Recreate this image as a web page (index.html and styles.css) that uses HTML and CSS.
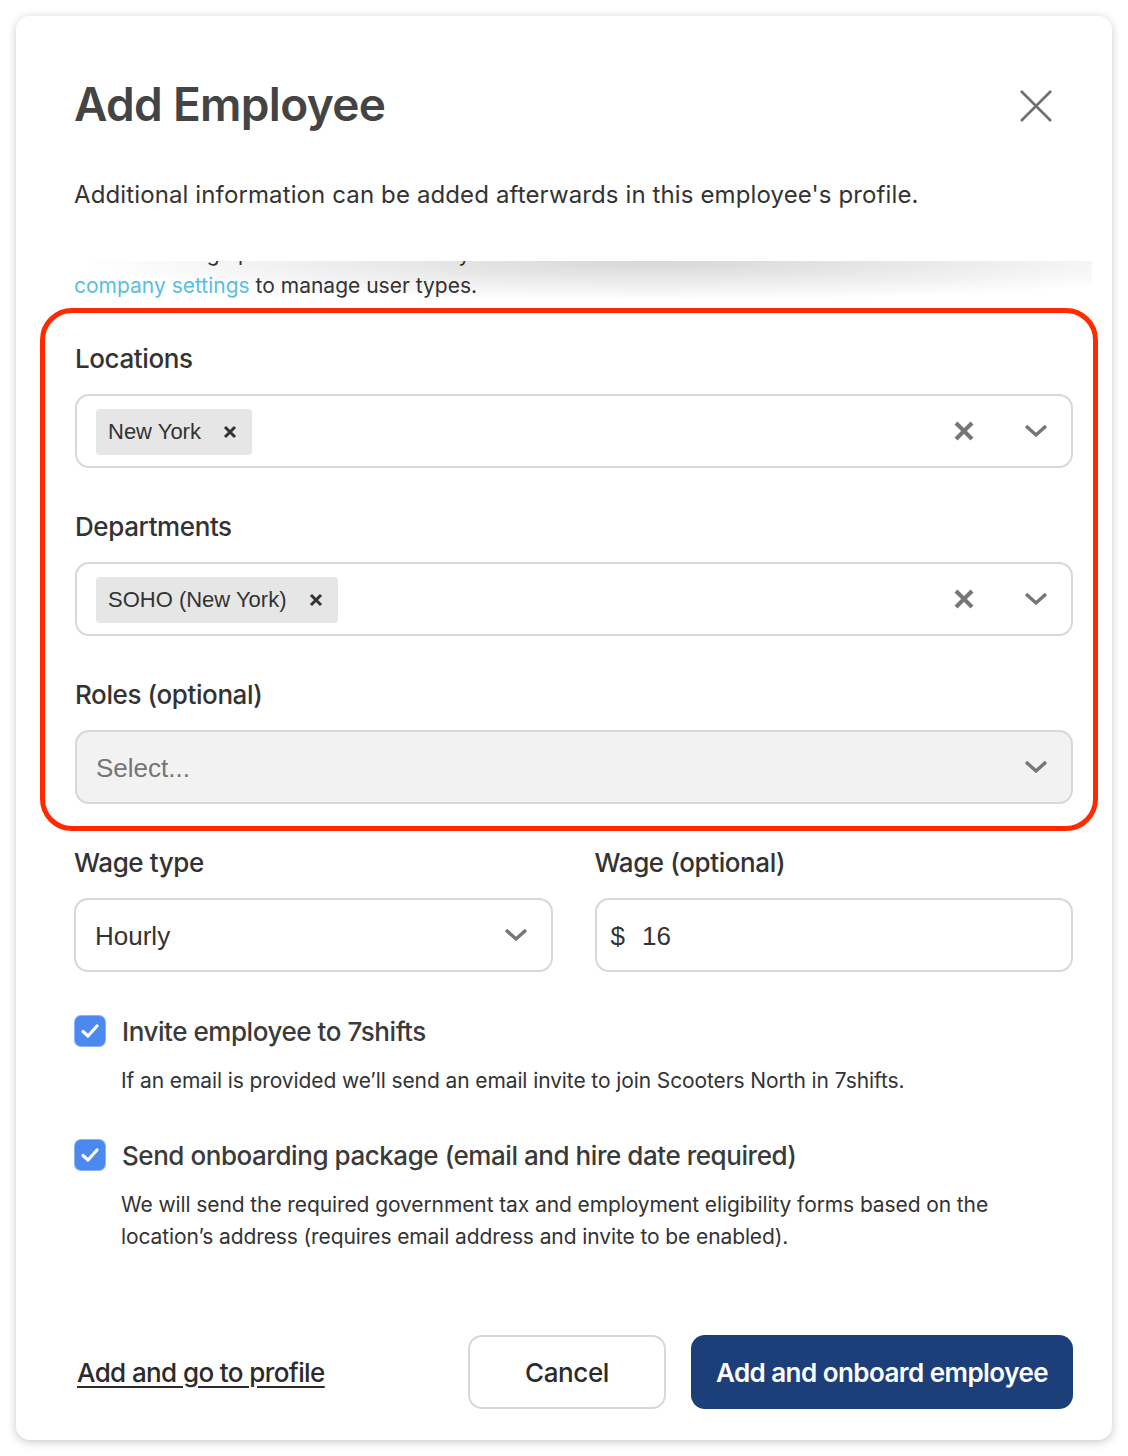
FILE: index.html
```html
<!DOCTYPE html>
<html lang="en">

<head>
  <meta charset="utf-8">
  <title>Add Employee</title>
  <meta name="viewport" content="width=device-width, initial-scale=1.0">
  <link rel="stylesheet" href="styles.css">
</head>

<body>
  <div class="modal">
    <div class="modal-header">
      <div class="title-row">
        <h1>Add Employee</h1>
        <button class="close-btn" aria-label="Close">
          <svg width="34" height="34" viewBox="0 0 34 34"><path d="M2 2 L32 32 M32 2 L2 32" stroke="#6f6f6f" stroke-width="2.6" fill="none"/></svg>
        </button>
      </div>
      <p class="subtitle">Additional information can be added afterwards in this employee's profile.</p>
    </div>

    <div class="modal-body">
      <div class="scroll-inner">
        <p class="hint">Need to change permissions? Head to your <br><a href="#">company settings</a> to manage user types.</p>

        <div class="highlight">
          <label class="field-label">Locations</label>
          <div class="select">
            <div class="select-values">
              <span class="tag">New York
                <svg width="14" height="14" viewBox="0 0 14 14"><path d="M2 2 L12 12 M12 2 L2 12" stroke="#333" stroke-width="3" fill="none"/></svg>
              </span>
            </div>
            <span class="clear-icon">
              <svg width="20" height="20" viewBox="0 0 20 20"><path d="M2 2 L18 18 M18 2 L2 18" stroke="#767676" stroke-width="4" fill="none"/></svg>
            </span>
            <span class="chevron">
              <svg width="24" height="14" viewBox="0 0 24 14"><path d="M2 2 L12 11 L22 2" stroke="#767676" stroke-width="3.4" fill="none"/></svg>
            </span>
          </div>

          <label class="field-label">Departments</label>
          <div class="select">
            <div class="select-values">
              <span class="tag">SOHO (New York)
                <svg width="14" height="14" viewBox="0 0 14 14"><path d="M2 2 L12 12 M12 2 L2 12" stroke="#333" stroke-width="3" fill="none"/></svg>
              </span>
            </div>
            <span class="clear-icon">
              <svg width="20" height="20" viewBox="0 0 20 20"><path d="M2 2 L18 18 M18 2 L2 18" stroke="#767676" stroke-width="4" fill="none"/></svg>
            </span>
            <span class="chevron">
              <svg width="24" height="14" viewBox="0 0 24 14"><path d="M2 2 L12 11 L22 2" stroke="#767676" stroke-width="3.4" fill="none"/></svg>
            </span>
          </div>

          <label class="field-label">Roles (optional)</label>
          <div class="select disabled">
            <div class="select-values">
              <span class="placeholder">Select...</span>
            </div>
            <span class="chevron">
              <svg width="24" height="14" viewBox="0 0 24 14"><path d="M2 2 L12 11 L22 2" stroke="#767676" stroke-width="3.4" fill="none"/></svg>
            </span>
          </div>
        </div>

        <div class="wage-row">
          <div class="wage-col">
            <label class="field-label">Wage type</label>
            <div class="select">
              <div class="select-values">
                <span class="value">Hourly</span>
              </div>
              <span class="chevron">
                <svg width="24" height="14" viewBox="0 0 24 14"><path d="M2 2 L12 11 L22 2" stroke="#767676" stroke-width="3.4" fill="none"/></svg>
              </span>
            </div>
          </div>
          <div class="wage-col">
            <label class="field-label">Wage (optional)</label>
            <div class="money-input">
              <span class="currency">$</span>
              <span class="value">16</span>
            </div>
          </div>
        </div>

        <div class="check-item">
          <div class="check-row">
            <span class="checkbox">
              <svg width="22" height="22" viewBox="0 0 22 22"><path d="M4 11.5 L9 16 L18 6" stroke="#fff" stroke-width="3.2" fill="none" stroke-linecap="round" stroke-linejoin="round"/></svg>
            </span>
            <span class="check-label">Invite employee to 7shifts</span>
          </div>
          <p class="check-desc">If an email is provided we’ll send an email invite to join Scooters North in 7shifts.</p>
        </div>

        <div class="check-item">
          <div class="check-row">
            <span class="checkbox">
              <svg width="22" height="22" viewBox="0 0 22 22"><path d="M4 11.5 L9 16 L18 6" stroke="#fff" stroke-width="3.2" fill="none" stroke-linecap="round" stroke-linejoin="round"/></svg>
            </span>
            <span class="check-label">Send onboarding package (email and hire date required)</span>
          </div>
          <p class="check-desc">We will send the required government tax and employment eligibility forms based on the location’s address (requires email address and invite to be enabled).</p>
        </div>
      </div>
    </div>

    <div class="modal-footer">
      <a href="#" class="profile-link">Add and go to profile</a>
      <div class="footer-buttons">
        <button class="btn btn-cancel">Cancel</button>
        <button class="btn btn-primary">Add and onboard employee</button>
      </div>
    </div>
  </div>
</body>

</html>
```

FILE: styles.css
```css
* {
  box-sizing: border-box;
}

body {
  margin: 0;
  padding: 16px;
  background: #ffffff;
  font-family: Inter, "Liberation Sans", sans-serif;
  color: #333333;
}

.modal {
  width: 1096px;
  height: 1424px;
  background: #ffffff;
  border-radius: 14px;
  box-shadow: 0 2px 10px rgba(0, 0, 0, 0.22);
  display: flex;
  flex-direction: column;
  overflow: hidden;
}

.modal-header {
  position: relative;
  padding: 60px 39px 50px 58px;
  z-index: 2;
  background: #ffffff;
}

.modal-header::after {
  content: "";
  position: absolute;
  left: 30px;
  right: 20px;
  bottom: -40px;
  height: 40px;
  background: radial-gradient(ellipse 55% 100% at 58% 0%, rgba(0, 0, 0, 0.16), rgba(0, 0, 0, 0) 100%);
  pointer-events: none;
}

.title-row {
  display: flex;
  justify-content: space-between;
  align-items: center;
  height: 56px;
}

.title-row h1 {
  margin: 0;
  font-size: 46px;
  font-weight: 600;
  letter-spacing: -0.7px;
  color: #444444;
}

.close-btn {
  border: none;
  background: none;
  padding: 0;
  margin: 4px 20px 0 0;
  display: flex;
}

.subtitle {
  margin: 47px 0 0;
  font-size: 24px;
  line-height: 32px;
  letter-spacing: 0.12px;
  color: #333333;
}

.modal-body {
  flex: 1;
  overflow: hidden;
  padding: 0 39px 0 58px;
}

.scroll-inner {
  margin-top: -23px;
}

.hint {
  margin: 0;
  font-size: 21px;
  line-height: 32px;
  letter-spacing: 0;
  color: #333333;
}

.hint a {
  color: #57bfe0;
  text-decoration: none;
}

.highlight {
  margin: 6px -25px 0 -34px;
  padding: 30px 20px 22px 30px;
  border: 5px solid #ff2a00;
  border-radius: 32px;
  display: flex;
  flex-direction: column;
}

.field-label {
  display: block;
  font-size: 26px;
  font-weight: 500;
  line-height: 32px;
  letter-spacing: -0.4px;
  color: #333333;
  margin-bottom: 19px;
}

.highlight .select + .field-label {
  margin-top: 43px;
}

.select {
  height: 74px;
  border: 2px solid #d8d8d8;
  border-radius: 14px;
  display: flex;
  align-items: center;
  padding: 0 23px 0 19px;
  background: #ffffff;
}

.select.disabled {
  background: #f2f2f2;
}

.select-values {
  flex: 1;
  display: flex;
  align-items: center;
}

.tag {
  display: inline-flex;
  align-items: center;
  gap: 22px;
  height: 46px;
  padding: 0 15px 0 12px;
  margin-top: 2px;
  background: #e6e6e6;
  border-radius: 4px;
  font-family: "Liberation Sans", Arial, sans-serif;
  font-size: 22px;
  color: #333333;
}

.placeholder,
.value {
  font-family: "Liberation Sans", Arial, sans-serif;
  font-size: 26px;
  color: #333333;
  margin-top: 2px;
}

.placeholder {
  color: #757575;
}

.clear-icon {
  display: flex;
  margin-right: 50px;
}

.chevron {
  display: flex;
}

.wage-row {
  display: flex;
  gap: 42px;
  margin-top: 16px;
}

.wage-col {
  flex: 1;
}

.money-input {
  height: 74px;
  border: 2px solid #d8d8d8;
  border-radius: 14px;
  display: flex;
  align-items: center;
  gap: 17px;
  padding: 0 14px;
}

.money-input .currency {
  font-family: "Liberation Sans", Arial, sans-serif;
  font-size: 26px;
  color: #333333;
  margin-top: 2px;
}

.check-item {
  margin-top: 43px;
}

.check-item + .check-item {
  margin-top: 42px;
}

.check-row {
  display: flex;
  align-items: center;
  gap: 17px;
  height: 32px;
}

.checkbox {
  width: 30px;
  height: 30px;
  margin-left: 1px;
  border-radius: 6px;
  background: #4b88ef;
  box-shadow: 0 0 0 1px #8db2f3;
  display: flex;
  align-items: center;
  justify-content: center;
}

.check-label {
  font-size: 26px;
  font-weight: 500;
  letter-spacing: -0.45px;
  color: #3a3a3a;
}

.check-desc {
  margin: 18px 0 0 47px;
  font-size: 21px;
  line-height: 32px;
  letter-spacing: -0.1px;
  color: #333333;
}

.modal-footer {
  display: flex;
  justify-content: space-between;
  align-items: center;
  padding: 0 39px 31px 61px;
}

.profile-link {
  font-size: 26px;
  font-weight: 500;
  letter-spacing: -0.6px;
  color: #2b2b2b;
  text-decoration: underline;
  text-underline-offset: 4px;
}

.footer-buttons {
  display: flex;
  gap: 25px;
}

.btn {
  height: 74px;
  border-radius: 14px;
  font-family: Inter, "Liberation Sans", sans-serif;
  font-size: 26px;
  font-weight: 500;
  letter-spacing: -0.4px;
  cursor: pointer;
}

.btn-cancel {
  width: 198px;
  background: #ffffff;
  border: 2px solid #d8d8d8;
  color: #2b2b2b;
}

.btn-primary {
  width: 382px;
  background: #1c3f7a;
  border: none;
  color: #ffffff;
  font-weight: 600;
  letter-spacing: -0.55px;
}
```
